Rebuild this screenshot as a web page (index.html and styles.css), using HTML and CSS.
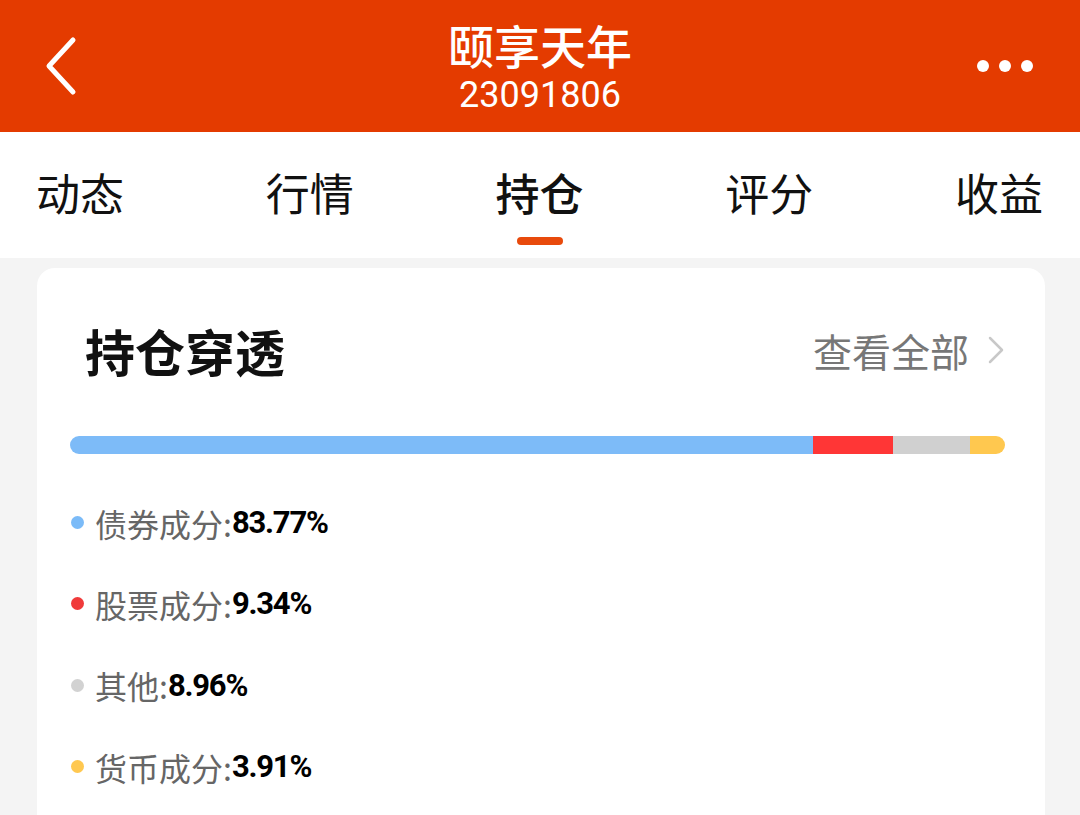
FILE: index.html
```html
<!DOCTYPE html>
<html lang="zh-CN">
<head>
<meta charset="utf-8">
<link rel="stylesheet" href="styles.css">
</head>
<body>
<header class="topbar">
  <svg class="back" width="40" height="62" viewBox="0 0 40 62"><path d="M30 5 L6 31 L30 57" fill="none" stroke="#fff" stroke-width="5" stroke-linecap="round" stroke-linejoin="round"/></svg>
  <div class="titles">
    <div class="title">颐享天年</div>
    <div class="code">23091806</div>
  </div>
  <div class="more"><span></span><span></span><span></span></div>
</header>
<nav class="tabs">
  <div class="tab">动态</div>
  <div class="tab">行情</div>
  <div class="tab active">持仓</div>
  <div class="tab">评分</div>
  <div class="tab">收益</div>
</nav>
<main class="content">
  <section class="card">
    <div class="card-head">
      <h2 class="card-title">持仓穿透</h2>
      <div class="view-all">查看全部<svg width="18" height="30" viewBox="0 0 18 30"><path d="M3 3 L15 15 L3 27" fill="none" stroke="#c8c8c8" stroke-width="2.5" stroke-linecap="round" stroke-linejoin="round"/></svg></div>
    </div>
    <div class="bar">
      <div class="seg seg-bond" style="width:79.5%"></div>
      <div class="seg seg-stock" style="width:8.55%"></div>
      <div class="seg seg-other" style="width:8.2%"></div>
      <div class="seg seg-cash" style="width:3.75%"></div>
    </div>
    <ul class="legend">
      <li><i class="dot dot-bond"></i><span class="lbl">债券成分:</span><b>83.77%</b></li>
      <li><i class="dot dot-stock"></i><span class="lbl">股票成分:</span><b>9.34%</b></li>
      <li><i class="dot dot-other"></i><span class="lbl">其他:</span><b>8.96%</b></li>
      <li><i class="dot dot-cash"></i><span class="lbl">货币成分:</span><b>3.91%</b></li>
    </ul>
  </section>
</main>
</body>
</html>
```

FILE: styles.css
```css
* { box-sizing: border-box; margin: 0; padding: 0; }
html, body { width: 1080px; height: 815px; overflow: hidden; }
body {
  background: #f4f4f4;
  font-family: "Noto Sans CJK SC", "Noto Sans", sans-serif;
  color: #111;
}
.topbar {
  height: 132px;
  background: #e43b00;
  position: relative;
  display: flex;
  align-items: flex-start;
  justify-content: center;
}
.back { position: absolute; left: 43px; top: 35px; }
.titles { text-align: center; color: #fff; display: flex; flex-direction: column; align-items: center; padding-top: 20px; }
.title { font-size: 46px; font-weight: 500; line-height: 48px; }
.code { font-family: Roboto, "Liberation Sans", sans-serif; font-size: 36px; line-height: 40px; margin-top: 7px; }
.more { position: absolute; right: 47px; top: 60px; display: flex; gap: 10px; }
.more span { width: 12px; height: 12px; border-radius: 50%; background: #fff; display: block; }

.tabs {
  height: 126px;
  background: #fff;
  display: flex;
  justify-content: space-between;
  padding: 0 37px 0 36px;
}
.tab {
  font-size: 44px;
  line-height: 1;
  padding-top: 38px;
  color: #111;
  position: relative;
}
.tab.active { font-weight: 500; }
.tab.active::after {
  content: "";
  position: absolute;
  left: 21px;
  top: 105px;
  width: 46px;
  height: 8px;
  border-radius: 4px;
  background: #e84a0c;
}

.content { padding: 10px 35px 0 37px; }
.card {
  background: #fff;
  border-radius: 18px;
  height: 600px;
  padding: 0 40px 0 33px;
}
.card-head {
  display: flex;
  align-items: center;
  justify-content: space-between;
  height: 168px;
  padding-left: 15px;
  padding-bottom: 4px;
}
.card-title { font-size: 50px; font-weight: 700; color: #111; line-height: 1; }
.view-all {
  font-size: 39px;
  color: #777;
  display: flex;
  align-items: center;
  gap: 18px;
  line-height: 1;
}
.bar {
  display: flex;
  height: 18px;
  border-radius: 9px;
  overflow: hidden;
}
.seg { height: 100%; }
.seg-bond { background: #7dbbf8; }
.seg-stock { background: #ff3636; }
.seg-other { background: #d0d0d0; }
.seg-cash { background: #ffc84f; }

.legend { list-style: none; padding-top: 28px; }
.legend li {
  display: flex;
  align-items: center;
  height: 81.3px;
}
.dot { width: 13px; height: 13px; border-radius: 50%; display: block; margin-left: 1px; margin-right: 11px; }
.dot-bond { background: #7bbbf8; }
.dot-stock { background: #f03a3a; }
.dot-other { background: #d2d2d2; }
.dot-cash { background: #ffc850; }
.lbl { font-size: 32px; color: #666; }
.legend b {
  font-family: Roboto, "Liberation Sans", sans-serif;
  font-weight: 700;
  font-size: 31px;
  letter-spacing: -1.2px;
  color: #000;
}
```
